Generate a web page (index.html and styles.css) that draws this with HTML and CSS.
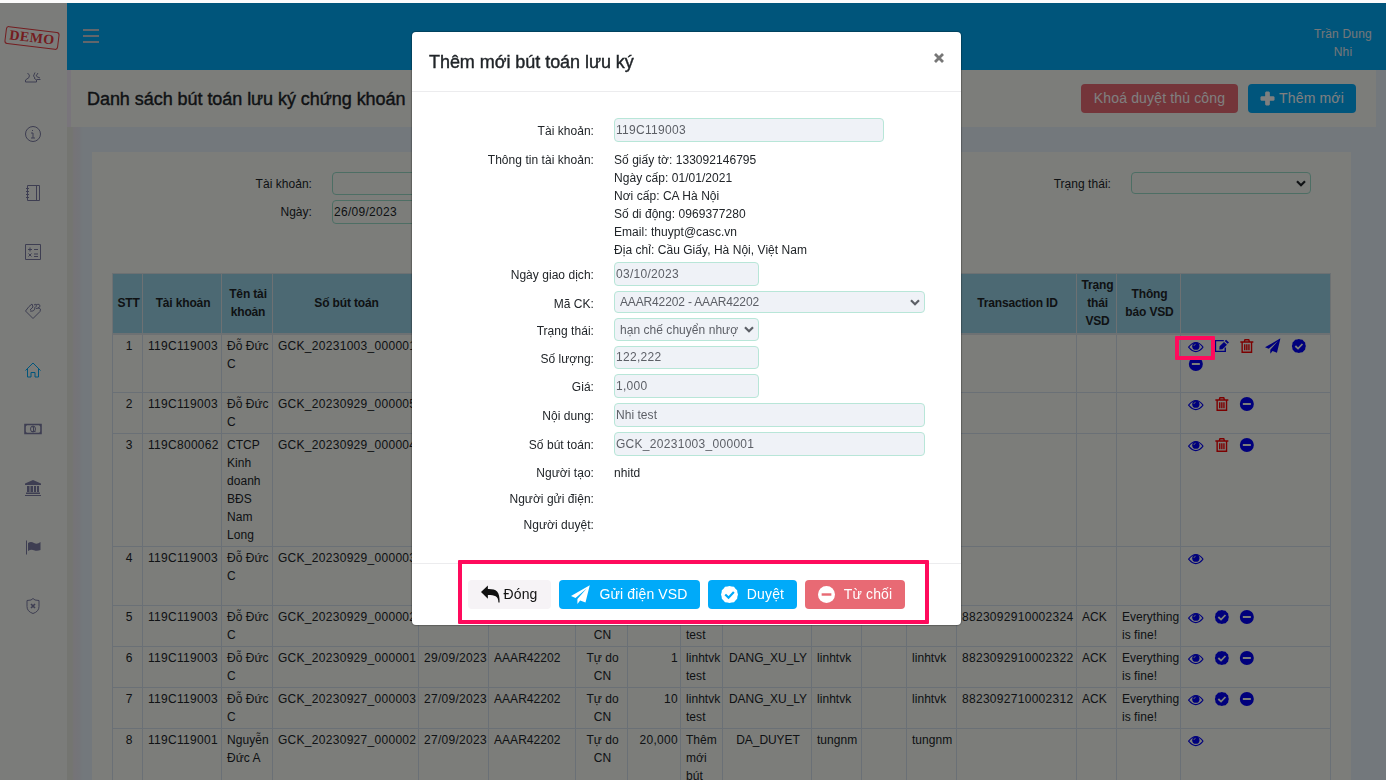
FILE: index.html
```html
<!DOCTYPE html>
<html lang="vi">
<head>
	<meta charset="utf-8">
	<title>Danh sách bút toán lưu ký chứng khoán</title>
	<link rel="stylesheet" href="styles.css">
</head>
<body>
<!-- icons -->
<svg width="0" height="0" style="display: none;">
	<symbol id="i-eye" viewBox="0 0 16 12">
		<path d="M.6 6.200Q8-3.400 15.400 6.200Q8 15.200.6 6.200Z" fill="none" stroke="currentColor" stroke-width="1.100"/>
		<circle cx="8" cy="5.200" r="3.700" fill="currentColor"/>
		<path d="M6 5Q6.200 3.400 7.800 3.200" fill="none" stroke="#ccc" stroke-width=".9"/>
	</symbol>
	<symbol id="i-edit" viewBox="0 0 16 14">
		<path d="M10 1.500H1.500v11h10V8.500" fill="none" stroke="currentColor" stroke-width="1.400"/>
		<path d="M12.300.6l3 2.800-1.400 1.400-3-2.800zM10.200 2.800l3 2.800-4.600 4.600-3.200.4.3-3.300z" fill="currentColor"/>
	</symbol>
	<symbol id="i-trash" viewBox="0 0 13 14">
		<path d="M4 2.500L4.600.8h3.800L9 2.500M0 3h13M1.800 3.200v10h9.400v-10M4.400 5.200v6M6.500 5.200v6M8.600 5.200v6" fill="none" stroke="currentColor" stroke-width="1.400"/>
	</symbol>
	<symbol id="i-plane" viewBox="0 0 16 16">
		<path d="M15.800.2L0 9.300l3.800 1.600L13.200 3 5.400 11.800V16l2.300-3 4.500 1.800z" fill="currentColor"/>
	</symbol>
	<symbol id="i-check" viewBox="0 0 14 14">
		<path d="M7 0l1.700.5 2 .2 1.200 1.500 1.400 1.300.2 1.900L14 7l-.5 1.700-.2 1.900-1.400 1.300-1.200 1.400-2 .2L7 14l-1.700-.5-2-.2-1.200-1.400-1.400-1.300-.2-1.900L0 7l.5-1.600.2-1.900 1.400-1.300L3.300.7l2-.2z" fill="currentColor"/>
		<path class="hole" d="M3.500 7l2.700 2.600 4.400-4.600" fill="none" stroke-width="1.800"/>
	</symbol>
	<symbol id="i-minus" viewBox="0 0 14 14">
		<circle cx="7" cy="7" r="7" fill="currentColor"/>
		<path class="hole" d="M3 7h8" fill="none" stroke-width="2"/>
	</symbol>
	<symbol id="i-reply" viewBox="0 0 18 16">
		<path d="M0 6L6.500 0v3.200C14 3 18 5 17.600 16H16.500C16.500 10 13 9 6.500 9V12.500z" fill="currentColor"/>
	</symbol>
	<symbol id="i-plus" viewBox="0 0 16 16">
		<path d="M5.500 1.500l1-1h3l1 1v4h4l1 1v3l-1 1h-4v4l-1 1h-3l-1-1v-4h-4l-1-1v-3l1-1h4z" fill="currentColor"/>
	</symbol>
	<symbol id="i-arrow" viewBox="0 0 10 7">
		<path d="M1 1.200l4 4 4-4" fill="none" stroke="currentColor" stroke-width="2.200"/>
	</symbol>
</svg>

<div class="app">
	<div class="sidebar">
		<div class="logo"><span>DEMO</span></div>
		<ul>
			<li class="users"><svg viewBox="0 0 16 16"><path d="M2.500 3q3 2 1.500 4.500L.5 10v2h11v-2L9 8M10 2.500L8.500 6l1.500 2M13 3l-2 3M11.500 6.500l3.500 1.500M15.500 9.500h-4"/></svg></li>
			<li><svg viewBox="0 0 16 16"><circle cx="8" cy="8" r="7.500"/><path d="M6 7h2v5M6 12h4M7.500 4v1"/></svg></li>
			<li><svg viewBox="0 0 16 16"><path d="M2.500.5h12v15h-12zM11.500.5v15M1 3.500h3M1 6.500h3M1 9.500h3M1 12.500h3"/></svg></li>
			<li><svg viewBox="0 0 16 16"><path d="M.5.5h15v15H.5zM3 5.500h4M5 3.500v4M9 5.500h4M3.500 9.500l3 3M6.500 9.500l-3 3M9 10h4M9 12.500h4"/></svg></li>
			<li><svg viewBox="0 0 16 16"><path d="M.5 8L8 15.500l7-7Q16.500 5.500 14 5l-3 .5M.5 8L4 3.500 7 1l1 3-3 3M5 8q5 1 5-4M9 2q3-2 2 2M11 2q4-2 4 1.500l-2 1.500"/></svg></li>
			<li class="active"><svg viewBox="0 0 16 16"><path d="M.5 8.500L8 1l7.500 7.500M2.500 7v8h3.500v-4.500h4V15h3.500V7"/></svg></li>
			<li><svg viewBox="0 0 16 16"><path d="M0 3.500h16v9H0z" stroke-width="1.600"/><path d="M7 6l1.500-.5v5M6.500 10.500h4"/><ellipse cx="8" cy="8" rx="2.500" ry="3"/><path class="solid" d="M0 3h3L0 6zM16 3h-3l3 3zM0 13h3l-3-3zM16 13h-3l3-3z"/></svg></li>
			<li><svg viewBox="0 0 16 16"><path class="solid" d="M8 0l8 3.500V5H0V3.500zM2 6h2.500v6H2zM5.500 6H8v6H5.500zM9 6h2v6H9zM12 6h2v6h-2zM1 12.500h14V14H1zM0 15h16v1H0z"/></svg></li>
			<li><svg viewBox="0 0 16 16"><path d="M1.500 1.500v14"/><path class="solid" d="M3 4q3-2 6 0t6.500-1v8q-3.500 1.500-6.500.2t-6 .8z"/></svg></li>
			<li><svg viewBox="0 0 16 16"><path d="M8 .5l2 1.500 4 .5v6q0 5-6 7-6-2-6-7v-6L6 2z"/><path d="M6 6l4 4M10 6l-4 4" stroke-width="1.600"/></svg></li>
		</ul>
	</div>

	<div class="main">
		<div class="topbar">
			<div class="burger"><i></i><i></i><i></i></div>
			<div class="user">Trần Dung<br>Nhi</div>
		</div>
		<div class="title-bar">
			<h1>Danh sách bút toán lưu ký chứng khoán</h1>
			<button class="btn btn-red">Khoá duyệt thủ công</button>
			<button class="btn btn-blue"><svg class="plus"><use href="#i-plus"/></svg>Thêm mới</button>
		</div>
		<div class="content">
			<div class="panel">
				<div class="filter">
					<label>Tài khoản:</label>
					<div class="field"></div>
					<label>Trạng thái:</label>
					<div class="field select"><span></span><svg class="arrow"><use href="#i-arrow"/></svg></div>
					<label>Ngày:</label>
					<div class="field num">26/09/2023</div>
				</div>

				<table>
					<colgroup>
						<col class="w30"><col class="w79"><col class="w51"><col class="w146"><col class="w70"><col class="w87">
						<col class="w52"><col class="w53"><col class="w42"><col class="w89"><col class="w50"><col class="w45">
						<col class="w50"><col class="w120"><col class="w40"><col class="w64"><col class="w150">
					</colgroup>
					<thead>
					<tr>
						<th>STT</th><th>Tài khoản</th><th>Tên tài<br>khoản</th><th>Số bút toán</th><th></th><th></th>
						<th></th><th></th><th></th><th></th><th></th><th></th>
						<th></th><th>Transaction ID</th><th>Trạng<br>thái<br>VSD</th><th>Thông<br>báo VSD</th><th></th>
					</tr>
					</thead>
					<tbody>
					<tr class="lines3">
						<td>1</td><td class="num">119C119003</td><td>Đỗ Đức<br>C</td><td class="num">GCK_20231003_000001</td><td></td><td></td>
						<td></td><td></td><td></td><td></td><td></td><td></td><td></td><td></td><td></td><td></td>
						<td class="actions"><div><svg class="eye"><use href="#i-eye"/></svg><svg><use href="#i-edit"/></svg><svg class="red"><use href="#i-trash"/></svg><svg class="plane"><use href="#i-plane"/></svg><svg><use href="#i-check"/></svg><svg><use href="#i-minus"/></svg></div></td>
					</tr>
					<tr class="lines2">
						<td>2</td><td class="num">119C119003</td><td>Đỗ Đức<br>C</td><td class="num">GCK_20230929_000005</td><td></td><td></td>
						<td></td><td></td><td></td><td></td><td></td><td></td><td></td><td></td><td></td><td></td>
						<td class="actions"><div><svg class="eye"><use href="#i-eye"/></svg><svg class="red"><use href="#i-trash"/></svg><svg><use href="#i-minus"/></svg></div></td>
					</tr>
					<tr class="lines6">
						<td>3</td><td class="num">119C800062</td><td>CTCP<br>Kinh<br>doanh<br>BĐS<br>Nam<br>Long</td><td class="num">GCK_20230929_000004</td><td></td><td></td>
						<td></td><td></td><td></td><td></td><td></td><td></td><td></td><td></td><td></td><td></td>
						<td class="actions"><div><svg class="eye"><use href="#i-eye"/></svg><svg class="red"><use href="#i-trash"/></svg><svg><use href="#i-minus"/></svg></div></td>
					</tr>
					<tr class="lines3">
						<td>4</td><td class="num">119C119003</td><td>Đỗ Đức<br>C</td><td class="num">GCK_20230929_000003</td><td></td><td></td>
						<td></td><td></td><td></td><td></td><td></td><td></td><td></td><td></td><td></td><td></td>
						<td class="actions"><div><svg class="eye"><use href="#i-eye"/></svg></div></td>
					</tr>
					<tr class="lines2">
						<td>5</td><td class="num">119C119003</td><td>Đỗ Đức<br>C</td><td class="num">GCK_20230929_000002</td><td></td><td></td>
						<td class="center">Tự do<br>CN</td><td></td><td>linhtvk<br>test</td><td></td><td></td><td></td><td></td>
						<td class="num">8823092910002324</td><td>ACK</td><td>Everything<br>is fine!</td>
						<td class="actions"><div><svg class="eye"><use href="#i-eye"/></svg><svg><use href="#i-check"/></svg><svg><use href="#i-minus"/></svg></div></td>
					</tr>
					<tr class="lines2">
						<td>6</td><td class="num">119C119003</td><td>Đỗ Đức<br>C</td><td class="num">GCK_20230929_000001</td><td class="num">29/09/2023</td><td>AAAR42202</td>
						<td class="center">Tự do<br>CN</td><td class="right num">1</td><td>linhtvk<br>test</td><td class="center status">DANG_XU_LY</td><td>linhtvk</td><td></td><td>linhtvk</td>
						<td class="num">8823092910002322</td><td>ACK</td><td>Everything<br>is fine!</td>
						<td class="actions"><div><svg class="eye"><use href="#i-eye"/></svg><svg><use href="#i-check"/></svg><svg><use href="#i-minus"/></svg></div></td>
					</tr>
					<tr class="lines2">
						<td>7</td><td class="num">119C119003</td><td>Đỗ Đức<br>C</td><td class="num">GCK_20230927_000003</td><td class="num">27/09/2023</td><td>AAAR42202</td>
						<td class="center">Tự do<br>CN</td><td class="right num">10</td><td>linhtvk<br>test</td><td class="center status">DANG_XU_LY</td><td>linhtvk</td><td></td><td>linhtvk</td>
						<td class="num">8823092710002312</td><td>ACK</td><td>Everything<br>is fine!</td>
						<td class="actions"><div><svg class="eye"><use href="#i-eye"/></svg><svg><use href="#i-check"/></svg><svg><use href="#i-minus"/></svg></div></td>
					</tr>
					<tr class="last">
						<td>8</td><td class="num">119C119001</td><td>Nguyễn<br>Đức A</td><td class="num">GCK_20230927_000002</td><td class="num">27/09/2023</td><td>AAAR42202</td>
						<td class="center">Tự do<br>CN</td><td class="right num">20,000</td><td>Thêm<br>mới<br>bút</td><td class="center status">DA_DUYET</td><td>tungnm</td><td></td><td>tungnm</td>
						<td></td><td></td><td></td>
						<td class="actions"><div><svg class="eye"><use href="#i-eye"/></svg></div></td>
					</tr>
					</tbody>
				</table>
			</div>
		</div>
	</div>
</div>

<div class="backdrop"></div>
<div class="mark mark-view"></div>

<div class="modal">
	<div class="modal-header">
		<h2>Thêm mới bút toán lưu ký</h2>
		<svg class="close" viewBox="0 0 10 10"><path d="M1 1l8 8M9 1l-8 8" stroke="currentColor" stroke-width="2.800"/></svg>
	</div>
	<div class="modal-body">
		<div class="row"><label>Tài khoản:</label><div class="field wide num">119C119003</div></div>
		<div class="row info">
			<label>Thông tin tài khoản:</label>
			<div>
				Số giấy tờ: 133092146795<br>
				Ngày cấp: 01/01/2021<br>
				Nơi cấp: CA Hà Nội<br>
				Số di động: 0969377280<br>
				Email: thuypt@casc.vn<br>
				Địa chỉ: Cầu Giấy, Hà Nội, Việt Nam
			</div>
		</div>
		<div class="row"><label>Ngày giao dịch:</label><div class="field small num">03/10/2023</div></div>
		<div class="row"><label>Mã CK:</label><div class="field full select h22"><span class="code">AAAR42202 - AAAR42202</span><svg class="arrow"><use href="#i-arrow"/></svg></div></div>
		<div class="row"><label>Trạng thái:</label><div class="field small select h23"><span>hạn chế chuyển nhượ</span><svg class="arrow"><use href="#i-arrow"/></svg></div></div>
		<div class="row"><label>Số lượng:</label><div class="field small h23 num">122,222</div></div>
		<div class="row"><label>Giá:</label><div class="field small num">1,000</div></div>
		<div class="row"><label>Nội dung:</label><div class="field full">Nhi test</div></div>
		<div class="row"><label>Số bút toán:</label><div class="field full num">GCK_20231003_000001</div></div>
		<div class="row text"><label>Người tạo:</label><div>nhitd</div></div>
		<div class="row text"><label>Người gửi điện:</label></div>
		<div class="row text"><label>Người duyệt:</label></div>
	</div>
	<div class="modal-footer">
		<button class="btn btn-light"><svg class="reply"><use href="#i-reply"/></svg>Đóng</button>
		<button class="btn btn-blue btn-send"><svg class="send"><use href="#i-plane"/></svg>Gửi điện VSD</button>
		<button class="btn btn-blue btn-ok"><svg><use href="#i-check"/></svg>Duyệt</button>
		<button class="btn btn-red btn-no"><svg><use href="#i-minus"/></svg>Từ chối</button>
		<div class="mark mark-footer"></div>
	</div>
</div>
</body>
</html>
```
FILE: styles.css
```css
* {
    box-sizing: border-box;
}

body {
    margin: 0;
    height: 780px;
    overflow: hidden;
    background: #fbfbfb;
    font-family: "Liberation Sans", Arial, sans-serif;
    font-size: 12px;
    line-height: 18px;
    letter-spacing: 0.04px;
    color: #212529;
}

h1, h2 {
    margin: 0;
    font-size: 18px;
    font-weight: normal;
    line-height: 24px;
    letter-spacing: -0.05px;
    -webkit-text-stroke: 0.4px currentColor;
}

.num {
    letter-spacing: 0.29px;
}

.app {
    display: flex;
    height: 780px;
    padding-top: 3px;
    overflow: hidden;
}

/* sidebar */
.sidebar {
    width: 67px;
    flex: none;
    background: #f6f9f4;
    color: #7c7ca4;
}

.logo {
    height: 67px;
    padding: 26px 0 0 5px;
}

.logo span {
    display: block;
    width: 54px;
    height: 18px;
    border: 1.5px solid #e83a40;
    border-radius: 3px;
    transform: rotate(7deg);
    color: #e83a40;
    font: bold 14px/16px "Liberation Serif", serif;
    letter-spacing: 0.4px;
    text-align: center;
}

.sidebar ul {
    margin: 0;
    padding: 0;
    list-style: none;
}

.sidebar li {
    height: 59px;
    padding: 0 0 0 25px;
}

.sidebar .users {
    height: 56px;
}

.sidebar svg {
    display: block;
    width: 16px;
    height: 16px;
    fill: none;
    stroke: currentColor;
    overflow: visible;
}

.sidebar .solid {
    fill: currentColor;
    stroke: none;
}

.sidebar .active {
    color: #00aaf8;
}

/* header */
.main {
    flex: 1;
    min-width: 0;
    background: #e6f1f8;
}

.topbar {
    display: flex;
    justify-content: space-between;
    height: 67px;
    padding: 22px 14px 0 16px;
    background: #00aaf6;
    color: #fff;
}

.burger {
    padding-top: 4px;
}

.burger i {
    display: block;
    width: 16px;
    height: 2px;
    margin-bottom: 4px;
    background: #c4cdd6;
}

.user {
    text-align: center;
    letter-spacing: 0.2px;
    color: #e8eef2;
}

.title-bar {
    display: flex;
    align-items: center;
    gap: 10px;
    height: 57px;
    margin-right: 10px;
    padding: 0 20px 0 16px;
    border-left: 4px solid #f2eaf6;
    background: #f8fbf5;
}

.title-bar h1 {
    flex: 1;
}

.btn {
    display: flex;
    align-items: center;
    justify-content: center;
    height: 29px;
    padding: 0 0 1px;
    border: none;
    border-radius: 4px;
    font: 14px/20px "Liberation Sans", Arial, sans-serif;
    letter-spacing: 0.15px;
    white-space: nowrap;
    color: #fff;
}

.btn svg {
    flex: none;
}

.btn-red {
    background: #e86a74;
}

.btn-blue {
    background: #00aaf9;
}

.title-bar .btn-red {
    width: 157px;
}

.title-bar .btn-blue {
    width: 108px;
}

.plus {
    width: 15px;
    height: 15px;
    margin-right: 4px;
}

.content {
    height: 653px;
    padding: 25px 35px 0 25px;
    background: linear-gradient(to right, #e8ebe2 0, #e8ebe2 5px, #ebe8ef 7px, #e8eaf2 12px, #e6f1f8 16px);
}

.panel {
    height: 628px;
    padding: 20px;
    overflow: hidden;
    background: #f8fbf5;
}

.field {
    height: 24px;
    padding: 0 1px;
    border: 1px solid #9addc9;
    border-radius: 4px;
    line-height: 22px;
}

.select {
    display: flex;
    align-items: center;
    justify-content: space-between;
    height: 22px;
    padding: 0 4px 0 5px;
}

.arrow {
    flex: none;
    width: 10px;
    height: 7px;
}

.filter {
    display: grid;
    grid-template-columns: 200px 270px 489px 180px;
    column-gap: 20px;
    row-gap: 5px;
    height: 101px;
    align-content: start;
}

.filter label {
    padding-top: 3px;
    text-align: right;
}

.filter .field:nth-child(2) {
    height: 23px;
}

/* table */
table {
    width: 1219px;
    table-layout: fixed;
    border-collapse: collapse;
}

.w30 { width: 30px; }
.w40 { width: 40px; }
.w42 { width: 42px; }
.w45 { width: 45px; }
.w50 { width: 50px; }
.w51 { width: 51px; }
.w52 { width: 52px; }
.w53 { width: 53px; }
.w64 { width: 64px; }
.w70 { width: 70px; }
.w79 { width: 79px; }
.w87 { width: 87px; }
.w89 { width: 89px; }
.w120 { width: 120px; }
.w146 { width: 146px; }
.w150 { width: 150px; }

th {
    height: 60px;
    padding: 0 0 0 2px;
    border: 1px solid #dbe2e6;
    border-bottom: 2px solid #dbe2e6;
    background: #98d3e6;
    letter-spacing: -0.15px;
    white-space: nowrap;
}

td {
    padding: 2px 5px;
    border: 1px solid #d5e1ec;
    vertical-align: top;
    white-space: nowrap;
}

td:first-child {
    padding-left: 8px;
    text-align: center;
}

.center {
    padding-right: 3px;
    text-align: center;
}

.status {
    letter-spacing: -0.05px;
}

.right {
    padding-right: 2px;
    text-align: right;
}

.lines2 { height: 41px; }
.lines3 { height: 59px; }
.lines6 { height: 113px; }
.last { height: 77px; }

.actions div {
    display: flex;
    flex-wrap: wrap;
    width: 132px;
    column-gap: 10px;
    padding-left: 2px;
    color: #0000f8;
}

.actions svg {
    width: 15.7px;
    height: 14px;
    margin: 2px 0;
}

.actions .eye {
    height: 12px;
    margin: 4px 0 2px;
}

.actions .plane {
    height: 16px;
    margin: 1px 0;
}

.actions .red {
    color: #f80000;
}

.hole {
    stroke: var(--hole, #f8fbf5);
}

/* dialog */
.backdrop {
    position: fixed;
    top: 3px;
    right: 0;
    bottom: 0;
    left: 0;
    background: rgba(0, 0, 0, 0.5);
}

.mark {
    position: absolute;
    border: 4px solid #ff0a5c;
    border-radius: 1px;
}

.mark-view {
    top: 336px;
    left: 1175px;
    width: 40px;
    height: 24px;
}

.modal {
    position: absolute;
    top: 32px;
    left: 412px;
    width: 549px;
    height: 593px;
    border-radius: 4px;
    background: #fff;
    box-shadow: 0 0 1px 1px rgba(0, 0, 0, 0.25);
}

.modal-header {
    display: flex;
    justify-content: space-between;
    height: 60px;
    padding: 18px 17px 0;
    border-bottom: 1px solid #ececee;
}

.close {
    width: 10px;
    height: 10px;
    margin-top: 3px;
    color: #777;
}

.modal-body {
    height: 471px;
    padding-top: 26px;
}

.row {
    display: grid;
    grid-template-columns: 182px auto;
    justify-content: start;
    column-gap: 20px;
    margin-bottom: 5px;
}

.row label {
    padding-top: 4px;
    text-align: right;
}

.row .field {
    border-color: #b8e6d8;
    background: #eff2f7;
    color: #5c5f66;
}

.row .small { width: 145px; }
.row .wide { width: 270px; }
.row .full { width: 311px; }
.row .h22 { height: 22px; }
.row .h23 { height: 23px; line-height: 20px; }

.row .select span {
    overflow: hidden;
    white-space: nowrap;
}

.code {
    letter-spacing: -0.15px;
}

.info {
    height: 108px;
    margin: 9px 0 3px;
}

.info label, .text label {
    padding-top: 0;
}

.text {
    height: 18px;
    margin: 8px 0;
}

.modal-footer {
    position: relative;
    display: flex;
    gap: 8px;
    height: 62px;
    padding: 16px 0 0 56px;
    border-top: 1px solid #ececee;
}

.modal-footer svg {
    width: 17px;
    height: 17px;
    margin-right: 9px;
}

.btn-light {
    width: 83px;
    background: #f6f3f6;
    color: #111;
}

.modal-footer .reply {
    width: 19px;
    height: 18px;
    margin-right: 3px;
}

.modal-footer .send {
    width: 19px;
    height: 19px;
    margin-right: 9px;
}

.btn-send { width: 141px; }
.btn-ok { width: 89px; --hole: #00aaf9; }
.btn-no { width: 100px; --hole: #e86a74; }

.mark-footer {
    top: -4px;
    left: 46px;
    width: 471px;
    height: 64px;
}
```
